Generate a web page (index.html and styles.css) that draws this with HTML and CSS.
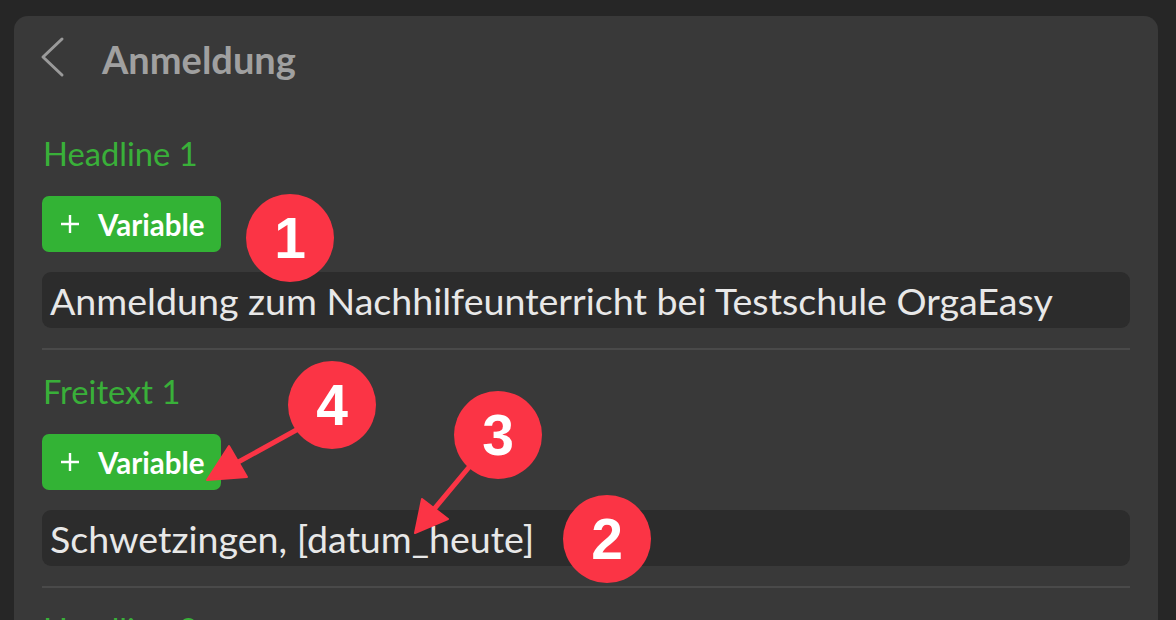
FILE: index.html
```html
<!DOCTYPE html>
<html lang="de">
<head>
<meta charset="utf-8">
<title>Anmeldung</title>
<link rel="stylesheet" href="styles.css">
</head>
<body>
<div class="panel">
  <header class="topbar">
    <svg class="back" width="26" height="42" viewBox="0 0 26 42"><polyline points="22,3 3,21 22,39" fill="none" stroke="#9a9a9a" stroke-width="3" stroke-linecap="round" stroke-linejoin="round"/></svg>
    <h1 class="title">Anmeldung</h1>
  </header>

  <section class="field">
    <div class="label">Headline 1</div>
    <button class="var-btn" type="button">
      <svg class="plus" width="20" height="20" viewBox="0 0 20 20"><path d="M10 1V19M1 10H19" stroke="#fff" stroke-width="2.4"/></svg>
      <span>Variable</span>
    </button>
    <div class="input">Anmeldung zum Nachhilfeunterricht bei Testschule OrgaEasy</div>
  </section>

  <section class="field">
    <div class="label">Freitext 1</div>
    <button class="var-btn" type="button">
      <svg class="plus" width="20" height="20" viewBox="0 0 20 20"><path d="M10 1V19M1 10H19" stroke="#fff" stroke-width="2.4"/></svg>
      <span>Variable</span>
    </button>
    <div class="input">Schwetzingen, [datum_heute]</div>
  </section>

  <section class="field">
    <div class="label">Headline 2</div>
  </section>
</div>

<svg class="arrows" width="1176" height="620" viewBox="0 0 1176 620">
  <g fill="#fb3445" stroke="#fb3445" stroke-linejoin="round">
    <line x1="300" y1="428" x2="222" y2="471" stroke-width="5" stroke-linecap="round"/>
    <polygon points="207,480 229,446 247,477" stroke-width="2"/>
    <line x1="470" y1="466" x2="425" y2="520" stroke-width="5" stroke-linecap="round"/>
    <polygon points="415,533 422,499 448,519" stroke-width="2"/>
  </g>
</svg>
<div class="badge b1">1</div>
<div class="badge b2">2</div>
<div class="badge b3">3</div>
<div class="badge b4">4</div>
</body>
</html>
```

FILE: styles.css
```css
html, body {
  margin: 0;
  padding: 0;
  background: #262626;
  overflow: hidden;
  height: 620px;
}
body {
  font-family: "Lato", "Noto Sans", sans-serif;
  position: relative;
}
.panel {
  margin: 16px 18px 0 14px;
  height: 700px;
  background: #393939;
  border-radius: 14px 14px 0 0;
  padding: 0 28px;
  box-sizing: border-box;
}
.topbar {
  display: flex;
  align-items: flex-start;
  height: 96px;
  padding-top: 21px;
  box-sizing: border-box;
  margin-left: -2px;
}
.back {
  display: block;
  margin-top: -1px;
}
.title {
  margin: 0 0 0 36px;
  font-size: 38px;
  font-weight: 700;
  color: #a0a0a0;
  line-height: 44px;
}
.field {
  border-bottom: 2px solid #4a4a4a;
  padding-top: 22px;
  padding-bottom: 20px;
}
.label {
  font-size: 32.7px;
  line-height: 40px;
  color: #39b039;
  font-weight: 400;
  padding-left: 1px;
}
.var-btn {
  display: flex;
  align-items: center;
  margin-top: 22px;
  width: 179px;
  height: 56px;
  padding: 0 0 0 18px;
  gap: 18px;
  border: 0;
  border-radius: 7px;
  background: #33b335;
  color: #fff;
  font-family: inherit;
  font-size: 29.5px;
  font-weight: 700;
  box-sizing: border-box;
}
.plus { display: block; }
.input {
  margin-top: 20px;
  height: 56px;
  background: #2c2c2c;
  border-radius: 9px;
  padding-left: 8px;
  display: flex;
  align-items: center;
  font-size: 37.6px;
  color: #e8e8e8;
  white-space: nowrap;
}
.arrows {
  position: absolute;
  left: 0;
  top: 0;
}
.badge {
  position: absolute;
  width: 88px;
  height: 88px;
  border-radius: 50%;
  background: #fb3445;
  color: #fff;
  font-family: "Liberation Sans", Arial, sans-serif;
  font-weight: 700;
  font-size: 57px;
  line-height: 88px;
  text-align: center;
}
.b1 { left: 246px; top: 194px; }
.b2 { left: 563px; top: 495px; }
.b3 { left: 454px; top: 391px; }
.b4 { left: 288px; top: 361px; }
```
